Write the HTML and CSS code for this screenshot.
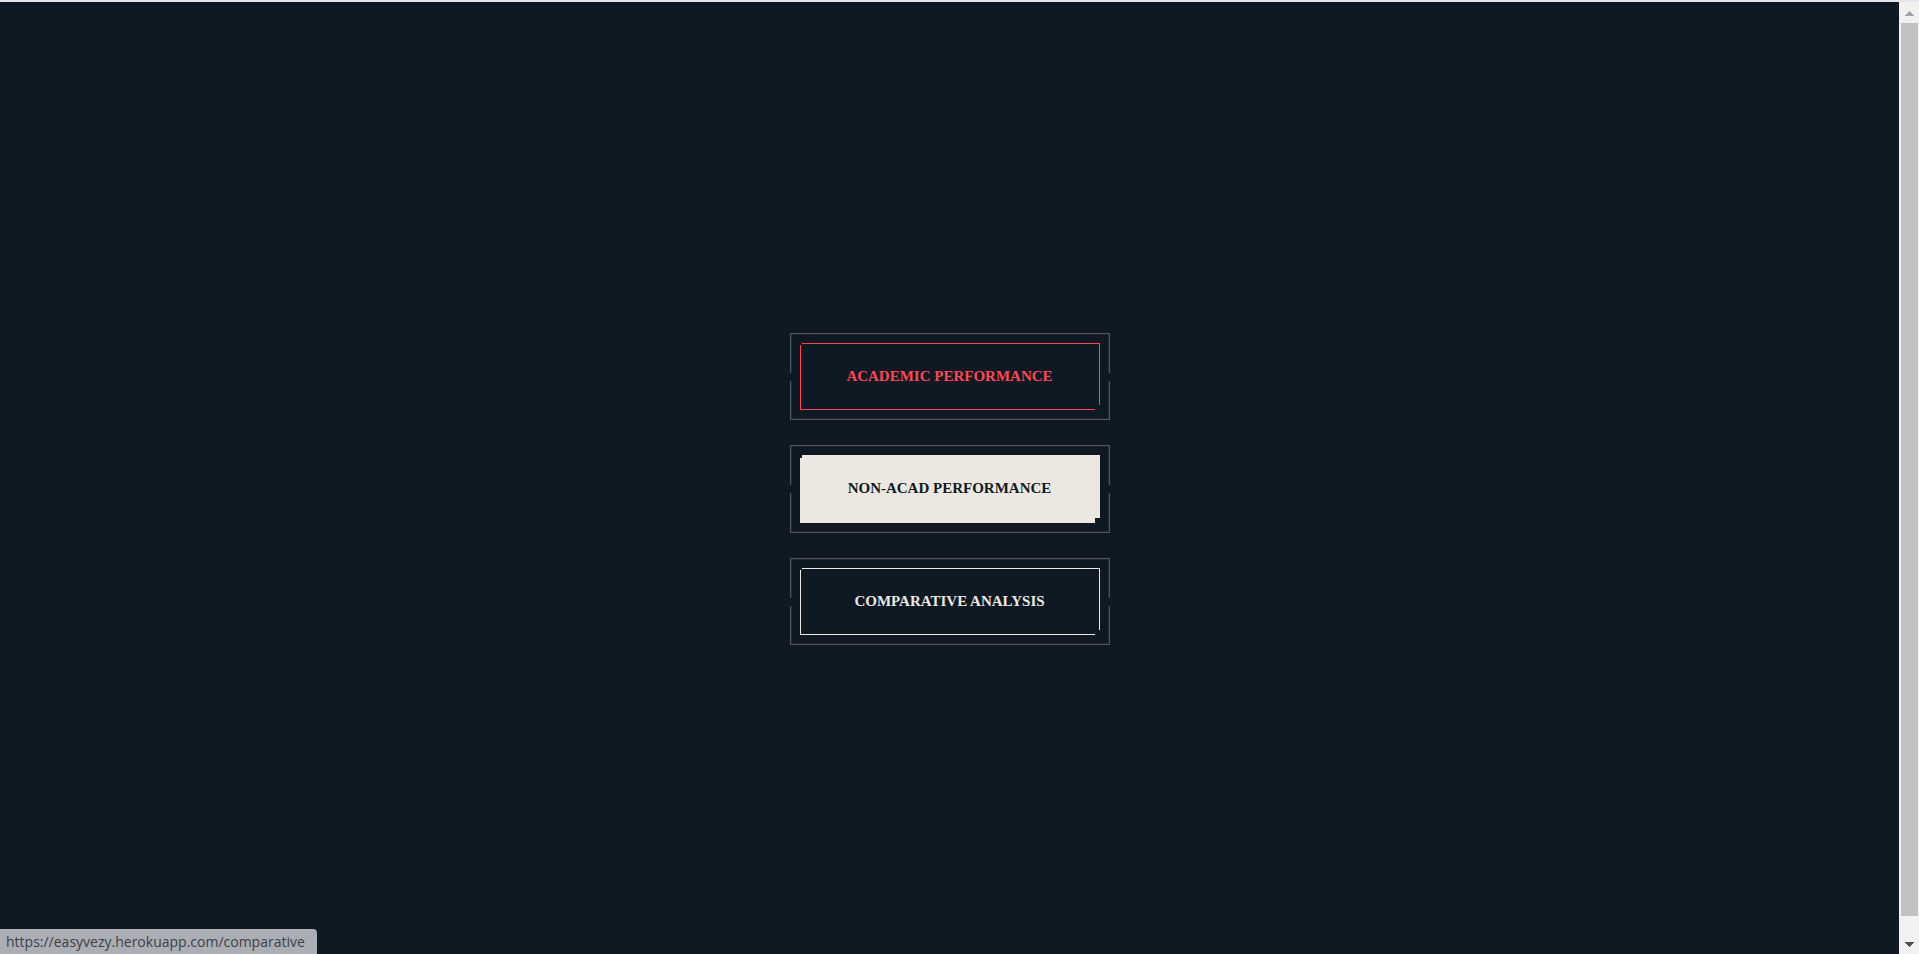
FILE: index.html
```html
<!DOCTYPE html>
<html lang="en">
<head>
<meta charset="utf-8">
<title>Performance</title>
<link rel="stylesheet" href="styles.css">
</head>
<body>
<div class="window">
  <main class="page">
    <nav class="menu" aria-label="Reports">
      <a class="btn btn-accent" href="#academic"><span class="btn-inner"><span class="btn-label">ACADEMIC PERFORMANCE</span></span></a>
      <a class="btn btn-filled" href="#non-academic"><span class="btn-inner"><span class="btn-label">NON-ACAD PERFORMANCE</span></span></a>
      <a class="btn btn-light" href="#comparative"><span class="btn-inner"><span class="btn-label">COMPARATIVE ANALYSIS</span></span></a>
    </nav>
  </main>
  <div class="scrollbar" aria-hidden="true">
    <svg class="arrow" width="9" height="5" viewBox="0 0 9 5" shape-rendering="crispEdges"><path d="M4 0h1v1h1v1h1v1h1v1h1v1H0V4h1V3h1V2h1V1h1z" fill="#a3a3a3"/></svg>
    <div class="thumb"></div>
    <svg class="arrow arrow-down" width="9" height="5" viewBox="0 0 9 5" shape-rendering="crispEdges"><path d="M0 0h9v1H8v1H7v1H6v1H5v1H4V4H3V3H2V2H1V1H0z" fill="#505050"/></svg>
  </div>
</div>
<div class="status">https://easyvezy.herokuapp.com/comparative</div>
</body>
</html>
```
FILE: styles.css
```css
* { box-sizing: border-box; }
html, body { height: 100%; }
body {
  margin: 0;
  background: #0f1923;
  font-family: "Liberation Serif", "Times New Roman", serif;
}
.window {
  display: flex;
  height: 100vh;
  border-top: 2px solid #e4e7ec;
}
.page {
  flex: 1;
  display: flex;
  align-items: center;
  justify-content: center;
  padding-top: 22px;
}
.menu {
  display: flex;
  flex-direction: column;
  gap: 25px;
}
.btn {
  position: relative;
  display: block;
  width: 320px;
  padding: 10px;
  color: #ece8e1;
  font-size: 15px;
  font-weight: bold;
  line-height: 17px;
  text-align: center;
  text-decoration: none;
}
/* Outer frame, split in two halves with an opening between them */
.btn::before,
.btn::after {
  content: "";
  position: absolute;
  left: 0;
  right: 0;
  height: calc(50% - 5px);
  border: 1px solid #4e555c;
}
.btn::before {
  top: 0;
  border-bottom: 0;
  box-shadow: inset 1px 1px #202933, inset -1px 0 #202933;
}
.btn::after {
  bottom: 0;
  border-top: 0;
  box-shadow: inset 1px -1px #202933, inset -1px 0 #202933;
}
.btn-inner {
  position: relative;
  display: block;
  padding: 24px 0;
  border: 1px solid currentColor;
}
/* Corner notches */
.btn-inner::before,
.btn-inner::after {
  content: "";
  position: absolute;
  background: #0f1923;
}
.btn-inner::before {
  top: -1px;
  left: -1px;
  width: 2px;
  height: 2px;
}
.btn-inner::after {
  right: -1px;
  bottom: -1px;
  width: 5px;
  height: 5px;
}
.btn-label { display: block; }
.btn-accent { color: #ff4655; }
.btn-filled .btn-inner {
  padding-bottom: 25px;
  border-color: #ece8e1;
  background: #ece8e1;
  color: #0f1923;
}
.btn-filled .btn-inner::before { height: 3px; }
.scrollbar {
  display: flex;
  flex-direction: column;
  align-items: center;
  width: 20px;
  padding: 9px 0 7px 1px;
  background: #f1f1f1;
}
.arrow { display: block; flex: none; }
.thumb {
  flex: 1;
  width: 17px;
  margin: 7px 0 26px;
  background: #c1c1c1;
}
.status {
  position: fixed;
  left: 0;
  bottom: 0;
  padding: 3px 12px 2px 6px;
  border-top-right-radius: 4px;
  background: #abaeb5;
  color: #3c4046;
  font: 14px/20px "Open Sans", "Noto Sans", sans-serif;
}
```
